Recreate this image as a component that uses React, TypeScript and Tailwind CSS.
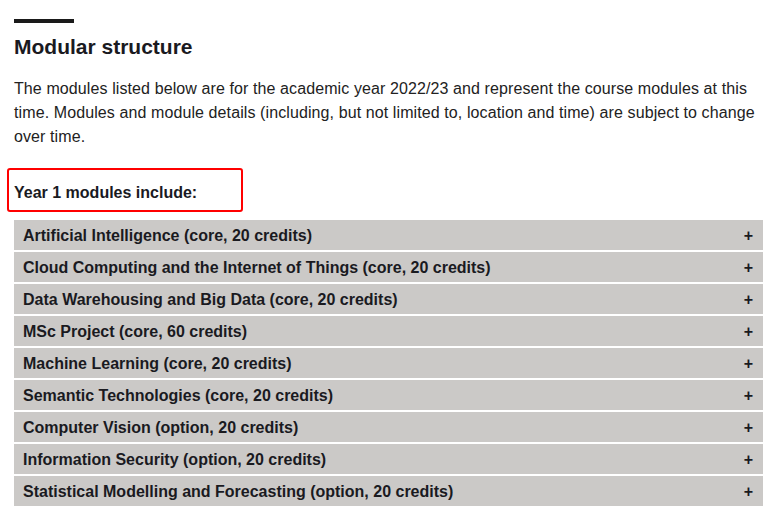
import React from "react";

const modules = [
  "Artificial Intelligence (core, 20 credits)",
  "Cloud Computing and the Internet of Things (core, 20 credits)",
  "Data Warehousing and Big Data (core, 20 credits)",
  "MSc Project (core, 60 credits)",
  "Machine Learning (core, 20 credits)",
  "Semantic Technologies (core, 20 credits)",
  "Computer Vision (option, 20 credits)",
  "Information Security (option, 20 credits)",
  "Statistical Modelling and Forecasting (option, 20 credits)",
];

export default function App() {
  return (
    <div
      className="w-[772px] h-[513px] overflow-hidden bg-white text-[#1a1a1f]"
      style={{ fontFamily: '"Liberation Sans", Arial, sans-serif' }}
    >
      <div className="pl-[14px] pr-[9px] pt-[19px]">
        <div className="w-[60px] h-[4px] bg-[#1a1a1a]" />
        <h2 className="mt-[10px] text-[21px] leading-[28px] font-bold">Modular structure</h2>
        <p className="mt-[16px] text-[16px] leading-[24px] tracking-[0.1px] text-[#222]">
          The modules listed below are for the academic year 2022/23 and represent the course modules at this
          time. Modules and module details (including, but not limited to, location and time) are subject to change
          over time.
        </p>
        <div className="-ml-[7px] mt-[19px] w-[236px] h-[44px] border-2 border-[#ff0000] rounded-[3px] flex items-center pl-[5px] pt-[6px]">
          <span className="text-[16px] font-bold leading-[20px]">Year 1 modules include:</span>
        </div>
        <div className="mt-[8px] flex flex-col gap-[2px]">
          {modules.map((m) => (
            <div
              key={m}
              className="h-[30px] bg-[#cbc9c7] flex items-center justify-between pl-[9px] pr-[10px] pt-[2px]"
            >
              <span className="text-[16px] font-bold leading-[20px]">{m}</span>
              <span className="text-[16px] font-bold leading-[20px]">+</span>
            </div>
          ))}
        </div>
      </div>
    </div>
  );
}
